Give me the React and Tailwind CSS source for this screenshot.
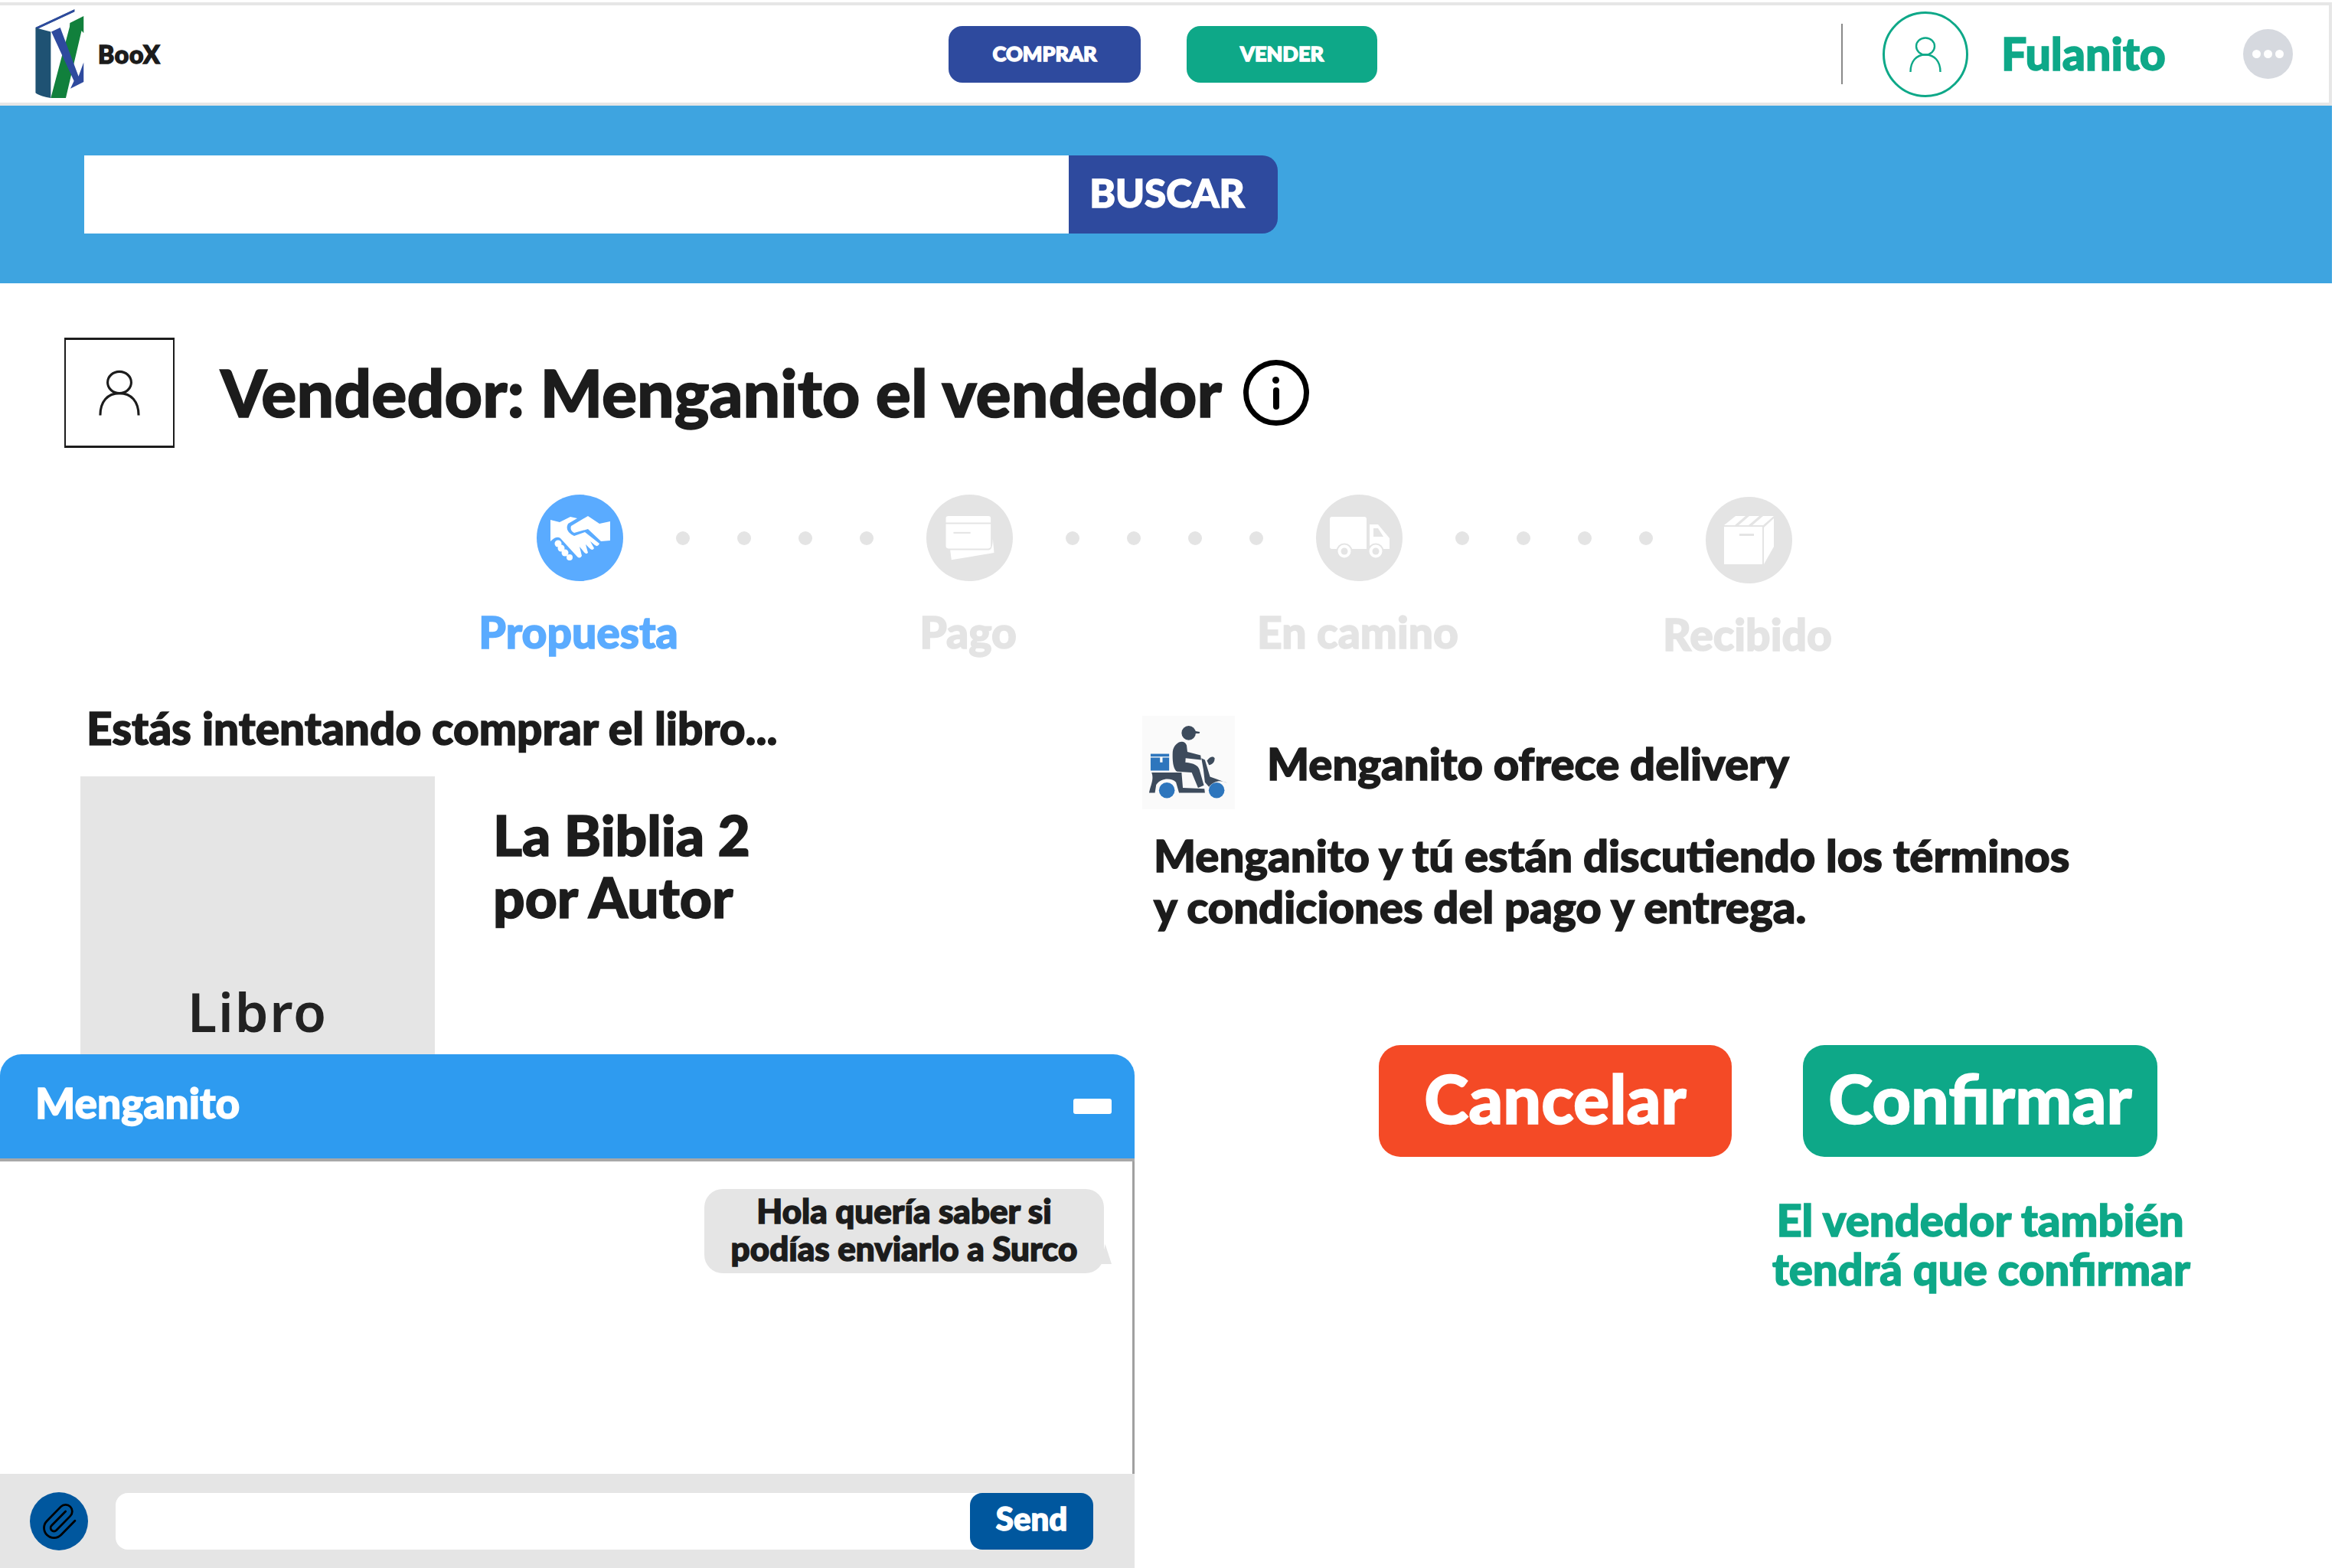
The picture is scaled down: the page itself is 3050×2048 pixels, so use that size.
import { Paperclip } from "lucide-react"

function UserIcon({ className }) {
    return (
        <svg viewBox="0 0 42 46" fill="none" stroke="currentColor" strokeWidth="2.4" className={className}>
            <ellipse cx="21" cy="12.5" rx="12" ry="11" />
            <path d="M1.5 46C1.5 32 9 23.5 21 23.5S40.5 32 40.5 46" />
        </svg>
    )
}

function Logo() {
    return (
        <svg viewBox="80 36 192 352" className="h-[117px] w-[64px]">
            <path d="M81 108L234 37V46L92 112L141 125V385C120 382 92 375 81 365Z" fill="#1f5273" />
            <path d="M81 108L234 37V46L92 112Z" fill="#2e4a9e" />
            <path d="M141 385L215 105L216 90L270 63V130L262 120L200 385Z" fill="#11803c" />
            <path d="M143 125L178 108L250 300L270 245V322L218 348L232 318Z" fill="#2e4a9e" />
        </svg>
    )
}

function HandshakeIcon() {
    return (
        <svg viewBox="0 0 78 58" className="h-[58px] w-[78px]" fill="white">
            <path d="M27 13L49 0L64 10L78 7V32L66 33L49 17L31 22Q25 19 27 13Z" />
            <path d="M0 5L12 8L26 1L35 3L23 10Q18 20 31 26L45 21L64 36Q62 41 58 38L52 33L57 42Q55 46 51 42L46 37L49 48Q46 51 43 46L38 40L41 52Q38 57 34 52L13 29Q8 25 0 33Z" />
            <circle cx="10" cy="36" r="4.5" />
            <circle cx="14" cy="42" r="4.5" />
            <circle cx="19" cy="48" r="4.5" />
            <circle cx="25" cy="54" r="4" />
        </svg>
    )
}

function DeliveryIcon() {
    return (
        <svg viewBox="125 40 365 365" className="h-[122px] w-[121px] bg-[#fafafa]">
            <circle cx="308" cy="106" r="28" fill="#3d4b5c" />
            <path d="M320 96L352 102L350 108L322 108Z" fill="#3d4b5c" />
            <path d="M245 180C250 140 292 128 300 155L303 180L355 194L357 212L296 205L295 222C330 225 345 235 350 250L368 312L345 322L320 262L262 258C248 250 243 220 245 180Z" fill="#3d4b5c" />
            <path d="M358 205L372 212L392 278L460 303C440 292 410 290 388 318L372 300L366 250Z" fill="#3d4b5c" />
            <path d="M380 215C390 200 405 195 410 205C412 222 398 232 388 232Z" fill="#3d4b5c" />
            <rect x="158" y="188" width="73" height="11" fill="#2e76bd" />
            <path d="M158 203H195V222H205V203H231V254H158Z" fill="#2e76bd" />
            <path d="M162 262H280L285 322L370 326L372 342H270L258 300C240 282 200 282 180 310L175 342H152C158 310 172 290 162 262Z" fill="#3d4b5c" />
            <circle cx="222" cy="332" r="31" fill="#2e76bd" />
            <circle cx="418" cy="332" r="31" fill="#2e76bd" />
        </svg>
    )
}

function Dots() {
    return (
        <div className="flex h-[113px] w-[396px] items-center justify-center gap-[62px]">
            {[1, 2, 3, 4].map((dot) => (
                <span key={dot} className="size-[18px] rounded-full bg-[#e4e4e4]" />
            ))}
        </div>
    )
}

function Step({ label, active, className = "", children }) {
    return (
        <div className={`flex w-[113px] flex-col items-center ${className}`}>
            <div className={`flex size-[113px] items-center justify-center rounded-full text-white ${active ? "bg-[#5aabff]" : "bg-[#e4e4e4]"}`}>
                {children}
            </div>
            <p className={`mt-[34px] mr-[4px] whitespace-nowrap text-[57px] leading-[64px] font-black ${active ? "text-[#5aabff]" : "text-[#e4e4e4]"}`}>
                {label}
            </p>
        </div>
    )
}

export default function App() {
    return (
        <div className="relative h-[2048px] w-[3050px] overflow-hidden bg-white text-[#1c1c1c] [font-family:Lato,sans-serif] [-webkit-text-stroke:1.5px_currentColor]">
            <header className="mt-[3px] flex h-[135px] w-[3046px] items-center border-t-4 border-r-4 border-b-4 border-[#e6e6e6]">
                <div className="ml-[46px] flex w-[1193px] items-center gap-[18px]">
                    <Logo />
                    <span className="text-[32px] font-black tracking-wide">BooX</span>
                </div>
                <button className="h-[74px] w-[251px] rounded-[18px] bg-[#2e4a9e] text-[27px] font-black text-white">COMPRAR</button>
                <button className="ml-[60px] h-[74px] w-[249px] rounded-[18px] bg-[#0ea888] text-[27px] font-black text-white">VENDER</button>
                <span className="ml-[606px] h-[79px] w-[2px] bg-[#8a8a8a]" />
                <div className="ml-[52px] flex size-[112px] items-center justify-center rounded-full border-[3px] border-[#0ea888] text-[#0ea888]">
                    <UserIcon className="h-[46px] w-[42px]" />
                </div>
                <span className="ml-[43px] text-[59px] font-black text-[#0ea888]">Fulanito</span>
                <div className="ml-[101px] flex size-[65px] items-center justify-center gap-[4px] rounded-full bg-[#d6d9df]">
                    {[1, 2, 3].map((dot) => (
                        <span key={dot} className="size-[11px] rounded-full bg-white" />
                    ))}
                </div>
            </header>

            <div className="flex h-[232px] w-[3046px] items-center bg-[#3ea4e0] pl-[110px]">
                <input className="h-[102px] w-[1286px] bg-white" />
                <button className="h-[102px] w-[273px] rounded-r-[20px] bg-[#2e4a9e] pr-[16px] pb-[4px] text-[51px] font-black text-white">BUSCAR</button>
            </div>

            <div className="mt-[71px] flex items-center pl-[84px]">
                <div className="flex size-[144px] items-center justify-center border-2 border-y-[3px] border-[#1c1c1c]">
                    <UserIcon className="h-[60px] w-[54px]" />
                </div>
                <h1 className="ml-[60px] pb-[3px] text-[86px] leading-none font-black">Vendedor: Menganito el vendedor</h1>
                <div className="ml-[28px] flex size-[86px] items-center justify-center rounded-full border-[7px] border-black">
                    <div className="flex flex-col items-center gap-[5px]">
                        <span className="size-[9px] rounded-full bg-black" />
                        <span className="h-[29px] w-[8px] rounded-full bg-black" />
                    </div>
                </div>
            </div>

            <div className="mt-[61px] flex pl-[701px]">
                <Step label="Propuesta" active>
                    <HandshakeIcon />
                </Step>
                <Dots />
                <Step label="Pago">
                    <svg viewBox="128 135 190 175" className="h-[58px] w-[64px]" fill="white">
                        <path d="M138 135H295Q305 135 305 145V161H128V145Q128 135 138 135Z" />
                        <path d="M128 167H305V253Q305 263 295 263H138Q128 263 128 253Z" />
                        <path d="M145 269H298Q312 268 313 225L318 280L150 308Z" />
                        <rect x="158" y="198" width="67" height="6" fill="#e4e4e4" />
                    </svg>
                </Step>
                <Dots />
                <Step label="En camino">
                    <svg viewBox="0 0 78 56" className="h-[56px] w-[78px]">
                        <path d="M3 0H45Q48 0 48 3V42H3Q0 42 0 39V3Q0 0 3 0Z" fill="white" />
                        <path d="M52 10H63L78 28V42H52Z" fill="white" />
                        <path d="M57 15H63L70 26H57Z" fill="#e4e4e4" />
                        <circle cx="19" cy="45" r="9.5" fill="white" stroke="#e4e4e4" strokeWidth="2" />
                        <circle cx="19" cy="45" r="4.5" fill="#e4e4e4" />
                        <circle cx="60" cy="45" r="9.5" fill="white" stroke="#e4e4e4" strokeWidth="2" />
                        <circle cx="60" cy="45" r="4.5" fill="#e4e4e4" />
                    </svg>
                </Step>
                <Dots />
                <Step label="Recibido" className="mt-[3px]">
                    <svg viewBox="0 0 65 63" className="h-[63px] w-[65px]" fill="white">
                        <path d="M0 14H50V63H0Z" />
                        <path d="M0 12L15 0H28L14 12Z" />
                        <path d="M19 12L33 0H46L32 12Z" />
                        <path d="M37 12L51 0H65L51 12Z" />
                        <path d="M52 15L65 3V40L52 63Z" />
                        <rect x="20" y="23" width="19" height="3" fill="#e4e4e4" />
                    </svg>
                </Step>
            </div>

            <div className="mt-[47px] flex">
                <section className="w-[1492px] shrink-0 pt-[9px] pl-[105px]">
                    <h2 className="ml-[8px] text-[58.5px] leading-[68px] font-black">Estás intentando comprar el libro...</h2>
                    <div className="mt-[30px] flex">
                        <div className="flex h-[400px] w-[463px] items-end justify-center bg-[#e5e5e5] pb-[40px] text-[70px] font-semibold tracking-wide text-[#222] [font-family:'Noto_Sans',sans-serif] [-webkit-text-stroke:0]">
                            Libro
                        </div>
                        <p className="mt-[36px] ml-[76px] text-[73px] leading-[81px] font-black">
                            La Biblia 2
                            <br />
                            por Autor
                        </p>
                    </div>
                </section>

                <section className="flex-1 pt-[28px]">
                    <div className="flex items-center gap-[42px]">
                        <DeliveryIcon />
                        <p className="text-[58px] font-black">Menganito ofrece delivery</p>
                    </div>
                    <p className="mt-[26px] ml-[15px] text-[58px] leading-[67px] font-black">
                        Menganito y tú están discutiendo los términos
                        <br />
                        y condiciones del pago y entrega.
                    </p>
                    <div className="mt-[148px] ml-[309px] flex gap-[93px]">
                        <button className="h-[146px] w-[461px] rounded-[28px] bg-[#f44a26] pb-[8px] text-[88px] font-black text-white">Cancelar</button>
                        <button className="h-[146px] w-[463px] rounded-[28px] bg-[#0ea888] pb-[8px] text-[88px] font-black text-white">Confirmar</button>
                    </div>
                    <p className="mt-[50px] ml-[863px] w-[463px] text-center text-[58px] leading-[64px] font-black whitespace-nowrap text-[#0ea888]">
                        <span className="-mx-[40px] block">El vendedor también</span>
                        <span className="-mx-[40px] block">tendrá que confirmar</span>
                    </p>
                </section>
            </div>

            <aside className="absolute bottom-0 left-0 flex h-[671px] w-[1482px] flex-col">
                <div className="flex h-[140px] items-center justify-between rounded-t-[28px] border-b-4 border-[#a8a8a8] bg-[#2e9bf0] pr-[30px] pb-[10px] pl-[46px]">
                    <span className="text-[55px] font-black text-white">Menganito</span>
                    <span className="mt-[10px] h-[20px] w-[50px] rounded-[3px] bg-white" />
                </div>
                <div className="flex flex-1 items-start justify-end border-r-[3px] border-[#a0a0a0] bg-white pt-[36px] pr-[37px]">
                    <div className="relative flex h-[110px] w-[522px] flex-col items-center justify-center rounded-[24px] bg-[#e5e5e5] pb-[4px] text-[44px] leading-[49px] font-black">
                        <span>Hola quería saber si</span>
                        <span>podías enviarlo a Surco</span>
                        <span className="absolute right-[-10px] bottom-[12px] h-[26px] w-[14px] bg-[#e5e5e5] [clip-path:polygon(40%_0,100%_100%,0_100%)]" />
                    </div>
                </div>
                <div className="flex h-[123px] items-center bg-[#e5e5e5] pl-[39px]">
                    <div className="flex size-[76px] items-center justify-center rounded-full bg-[#00579e] text-black">
                        <Paperclip className="size-[52px]" strokeWidth={1.3} />
                    </div>
                    <div className="ml-[36px] flex h-[74px] w-[1277px] justify-end rounded-[16px] bg-white">
                        <button className="h-[74px] w-[161px] rounded-[16px] bg-[#00579e] pb-[6px] text-[42px] font-black text-white">Send</button>
                    </div>
                </div>
            </aside>
        </div>
    )
}
